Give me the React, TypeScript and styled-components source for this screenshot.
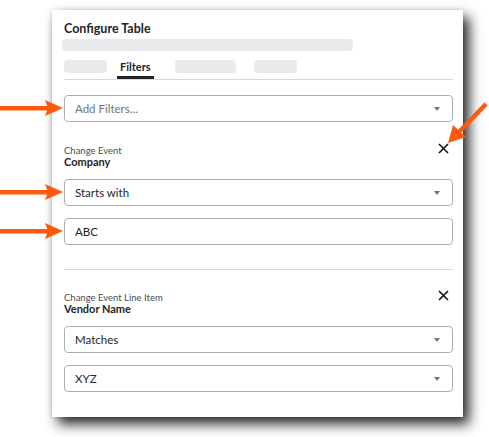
import React from 'react';
import styled, { createGlobalStyle } from 'styled-components';

const GlobalStyle = createGlobalStyle`
  body {
    margin: 0;
    background: #fff;
    font-family: Lato, "Liberation Sans", sans-serif;
  }
`;

const Page = styled.div`
  position: relative;
  width: 489px;
  height: 437px;
  padding: 10px 0 0 52px;
  box-sizing: border-box;
  overflow: hidden;
`;

const Panel = styled.div`
  width: 411px;
  height: 407px;
  box-sizing: border-box;
  background: #fff;
  padding: 11px 10px 0 12px;
  box-shadow: 6px 7px 12px rgba(0, 0, 0, 0.85), -1px 0 4px rgba(0, 0, 0, 0.12);
  display: flex;
  flex-direction: column;
`;

const Title = styled.div`
  font-size: 12.5px;
  font-weight: 700;
  color: #232628;
  line-height: 16px;
`;

const Skeleton = styled.div<{ w: number; h?: number }>`
  width: ${(p) => p.w}px;
  height: ${(p) => p.h ?? 13}px;
  border-radius: 4px;
  background: #e9eaeb;
  flex-shrink: 0;
`;

const TitleBar = styled(Skeleton)`
  margin: 2px 0 0 -2px;
`;

const Tabs = styled.div`
  display: flex;
  align-items: flex-start;
  margin-top: 9px;
  height: 19px;
  border-bottom: 1px solid #d6dadc;
`;

const Tab = styled.div<{ gap: number }>`
  margin-left: ${(p) => p.gap}px;
`;

const ActiveTab = styled.div`
  margin-left: 10px;
  padding: 0 3px;
  height: 19px;
  box-sizing: border-box;
  font-size: 11px;
  font-weight: 700;
  color: #232628;
  line-height: 14px;
  border-bottom: 3px solid #232628;
`;

const SelectBox = styled.div<{ top: number }>`
  margin-top: ${(p) => p.top}px;
  height: 27px;
  box-sizing: border-box;
  border: 1px solid #a8b0b4;
  border-radius: 4px;
  display: flex;
  align-items: center;
  justify-content: space-between;
  padding: 0 10px 0 10px;
  font-size: 11.5px;
`;

const Value = styled.span<{ muted?: boolean }>`
  color: ${(p) => (p.muted ? '#6a767c' : '#232628')};
`;

const Caret = styled.span`
  width: 0;
  height: 0;
  border-left: 3.5px solid transparent;
  border-right: 3.5px solid transparent;
  border-top: 4px solid #6a767c;
  margin-right: 2px;
`;

const GroupHead = styled.div<{ top: number }>`
  margin-top: ${(p) => p.top}px;
  display: flex;
  justify-content: space-between;
  align-items: flex-start;
`;

const Labels = styled.div`
  display: flex;
  flex-direction: column;
`;

const Small = styled.span`
  font-size: 9.5px;
  color: #464f53;
  line-height: 11px;
`;

const Strong = styled.span`
  font-size: 11px;
  font-weight: 700;
  color: #232628;
  line-height: 12px;
`;

const CloseBtn = styled.svg`
  width: 11px;
  height: 11px;
  margin: -2px 4px 0 0;
`;

const Divider = styled.div<{ top: number }>`
  margin-top: ${(p) => p.top}px;
  height: 1px;
  background: #d6dadc;
`;

const Arrow = styled.svg`
  position: absolute;
  overflow: visible;
`;

function Close() {
  return (
    <CloseBtn viewBox="0 0 11 11">
      <path d="M1 1 L10 10 M10 1 L1 10" stroke="#111" strokeWidth="1.6" />
    </CloseBtn>
  );
}

function Select({ top, text, muted, caret = true }: { top: number; text: string; muted?: boolean; caret?: boolean }) {
  return (
    <SelectBox top={top}>
      <Value muted={muted}>{text}</Value>
      {caret && <Caret />}
    </SelectBox>
  );
}

function RightArrow({ y }: { y: number }) {
  return (
    <Arrow style={{ left: 0, top: y - 9 }} width="63" height="18" viewBox="0 0 63 18">
      <rect x="0" y="7" width="48" height="4.5" fill="#fe5a0d" />
      <polygon points="45,1 63,9 45,17 48,9" fill="#fe5a0d" />
    </Arrow>
  );
}

export default function App() {
  return (
    <>
      <GlobalStyle />
      <Page>
        <Panel>
          <Title>Configure Table</Title>
          <TitleBar w={291} h={12} />
          <Tabs>
            <Tab gap={0}>
              <Skeleton w={43} />
            </Tab>
            <ActiveTab>Filters</ActiveTab>
            <Tab gap={21}>
              <Skeleton w={61} />
            </Tab>
            <Tab gap={18}>
              <Skeleton w={43} />
            </Tab>
          </Tabs>

          <Select top={15} text="Add Filters..." muted />

          <GroupHead top={23}>
            <Labels>
              <Small>Change Event</Small>
              <Strong>Company</Strong>
            </Labels>
            <Close />
          </GroupHead>
          <Select top={11} text="Starts with" />
          <Select top={12} text="ABC" caret={false} />

          <Divider top={24} />

          <GroupHead top={22}>
            <Labels>
              <Small>Change Event Line Item</Small>
              <Strong>Vendor Name</Strong>
            </Labels>
            <Close />
          </GroupHead>
          <Select top={11} text="Matches" />
          <Select top={12} text="XYZ" />
        </Panel>

        <RightArrow y={108} />
        <RightArrow y={192} />
        <RightArrow y={231} />
        <Arrow style={{ left: 446, top: 102 }} width="42" height="43" viewBox="0 0 42 43">
          <line x1="40" y1="2" x2="12" y2="31" stroke="#fe5a0d" strokeWidth="4.5" />
          <polygon points="2,41 7,23 20,35" fill="#fe5a0d" />
        </Arrow>
      </Page>
    </>
  );
}
